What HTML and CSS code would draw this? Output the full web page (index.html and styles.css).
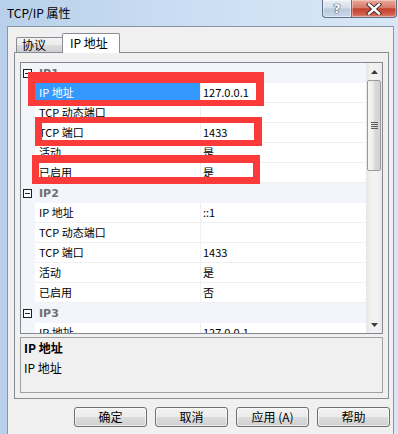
FILE: index.html
```html
<!DOCTYPE html>
<html>
<head>
<meta charset="utf-8">
<link rel="stylesheet" href="styles.css">
</head>
<body>
<div class="window">
  <div class="titlebar">
    <span class="title">TCP/IP 属性</span>
    <div class="caption">
      <div class="cb help"><span>?</span></div>
      <div class="cb close">
        <svg width="16" height="12" viewBox="0 0 16 12"><path d="M3 1.5 L13 10.5 M13 1.5 L3 10.5" stroke="#3a2a2a" stroke-width="4.2" stroke-linecap="square"/><path d="M3 1.5 L13 10.5 M13 1.5 L3 10.5" stroke="#fff" stroke-width="2.4" stroke-linecap="square"/></svg>
      </div>
    </div>
  </div>
  <div class="client">
    <div class="tabs">
      <div class="tab">协议</div>
      <div class="tab active">IP 地址</div>
    </div>
    <div class="panel">
      <div class="grid">
        <div class="rows">
          <div class="row cat"><span class="minus"></span><span class="cat-label">IP1</span></div>
          <div class="row"><span class="gutter"></span><span class="name sel">IP 地址</span><span class="value">127.0.0.1</span></div>
          <div class="row"><span class="gutter"></span><span class="name">TCP 动态端口</span><span class="value"></span></div>
          <div class="row"><span class="gutter"></span><span class="name">TCP 端口</span><span class="value">1433</span></div>
          <div class="row"><span class="gutter"></span><span class="name">活动</span><span class="value">是</span></div>
          <div class="row"><span class="gutter"></span><span class="name">已启用</span><span class="value">是</span></div>
          <div class="row cat"><span class="minus"></span><span class="cat-label">IP2</span></div>
          <div class="row"><span class="gutter"></span><span class="name">IP 地址</span><span class="value">::1</span></div>
          <div class="row"><span class="gutter"></span><span class="name">TCP 动态端口</span><span class="value"></span></div>
          <div class="row"><span class="gutter"></span><span class="name">TCP 端口</span><span class="value">1433</span></div>
          <div class="row"><span class="gutter"></span><span class="name">活动</span><span class="value">是</span></div>
          <div class="row"><span class="gutter"></span><span class="name">已启用</span><span class="value">否</span></div>
          <div class="row cat"><span class="minus"></span><span class="cat-label">IP3</span></div>
          <div class="row"><span class="gutter"></span><span class="name">IP 地址</span><span class="value">127.0.0.1</span></div>
        </div>
        <div class="scrollbar">
          <div class="arrow up"><svg width="7" height="4" viewBox="0 0 7 4"><path d="M3.5 0 L7 4 L0 4 Z" fill="#3c3c3c"/></svg></div>
          <div class="thumb">
            <div class="grip"><i></i><i></i><i></i><i></i></div>
          </div>
          <div class="track"></div>
          <div class="arrow down"><svg width="7" height="4" viewBox="0 0 7 4"><path d="M0 0 L7 0 L3.5 4 Z" fill="#3c3c3c"/></svg></div>
        </div>
      </div>
      <div class="desc">
        <div class="desc-title">IP 地址</div>
        <div class="desc-text">IP 地址</div>
      </div>
    </div>
    <div class="buttons">
      <div class="btn">确定</div>
      <div class="btn">取消</div>
      <div class="btn">应用 (A)</div>
      <div class="btn">帮助</div>
    </div>
  </div>
  <div class="mark m1"></div>
  <div class="mark m2"></div>
  <div class="mark m3"></div>
</div>
</body>
</html>
```
FILE: styles.css
```css
* { box-sizing: border-box; }
body {
  margin: 0;
  width: 398px;
  height: 434px;
  overflow: hidden;
  font-family: "Noto Sans CJK SC", sans-serif;
  color: #000;
}
.window {
  position: relative;
  width: 398px;
  height: 434px;
  background: linear-gradient(to right, #b8d0eb, #cfe1f4 60%, #d8e7f6);
  display: flex;
  flex-direction: column;
  overflow: hidden;
}
.titlebar {
  height: 26px;
  flex-shrink: 0;
  display: flex;
  align-items: flex-start;
}
.title {
  font-size: 12px;
  line-height: 16px;
  margin: 5px 0 0 7px;
}
.caption {
  margin-left: auto;
  margin-right: 1px;
  display: flex;
}
.cb {
  height: 18px;
  border: 1px solid #5f6f86;
  border-top: none;
  display: flex;
  align-items: center;
  justify-content: center;
}
.cb.help {
  width: 29px;
  border-right: none;
  border-radius: 0 0 0 4px;
  background: linear-gradient(#e8eef6, #d3deeb 48%, #b9c9dc 52%, #c9d7e8);
  box-shadow: inset 0 0 0 1px rgba(255,255,255,0.5);
}
.cb.help span {
  font-family: "DejaVu Sans", sans-serif;
  font-weight: bold;
  font-size: 13px;
  line-height: 13px;
  color: #fff;
  text-shadow: 0 0 1px #2f3d52, 0 0 1px #2f3d52, 0 0 1px #2f3d52;
}
.cb.close {
  width: 46px;
  border-radius: 0 0 4px 0;
  background: linear-gradient(#e9a99b, #d77a69 45%, #c4412d 52%, #cf5945 80%, #dc8474);
  box-shadow: inset 0 0 0 1px rgba(255,255,255,0.35);
}
.client {
  flex: 1;
  margin: 0 4px 0 7px;
  border: 1px solid #8a95a4;
  border-bottom: none;
  background: #f0f0f0;
  display: flex;
  flex-direction: column;
}
.tabs {
  margin: 6px 0 -1px 8px;
  height: 20px;
  display: flex;
  align-items: flex-end;
  position: relative;
  z-index: 1;
}
.tab {
  width: 46px;
  height: 15px;
  margin-bottom: 1px;
  border: 1px solid #898c95;
  border-bottom: none;
  border-right: none;
  border-radius: 2px 0 0 0;
  background: linear-gradient(#f3f3f3, #ebebeb 50%, #dcdcdc 50%, #cfcfcf);
  font-size: 12px;
  line-height: 14px;
  padding-left: 5px;
}
.tab.active {
  width: 58px;
  height: 20px;
  margin-bottom: 0;
  border-right: 1px solid #898c95;
  border-radius: 2px 2px 0 0;
  background: #fff;
  padding-left: 7px;
  line-height: 17px;
}
.panel {
  margin: 0 4px 0 6px;
  height: 347px;
  border: 1px solid #898c95;
  background: #f0f0f0;
  padding: 9px 5px 5px 5px;
  display: flex;
  flex-direction: column;
}
.grid {
  height: 272px;
  border: 1px solid #828790;
  background: #fff;
  display: flex;
  overflow: hidden;
}
.rows {
  flex: 1;
  overflow: hidden;
  font-size: 11px;
}
.row {
  height: 20px;
  display: flex;
  line-height: 19px;
}
.gutter {
  width: 14px;
  flex-shrink: 0;
  background: #f2f5fa;
}
.name {
  width: 165px;
  flex-shrink: 0;
  padding-left: 4px;
  border-bottom: 1px solid #f0f0f0;
  white-space: nowrap;
}
.name.sel {
  background: #3399ff;
  color: #fff;
}
.value {
  flex: 1;
  padding-left: 2px;
  border-left: 1px solid #f0f0f0;
  border-bottom: 1px solid #f0f0f0;
}
.row.cat {
  background: #f2f5fa;
  align-items: center;
}
.minus {
  width: 9px;
  height: 9px;
  margin: 0 7px 0 2px;
  border: 1px solid #1e1e1e;
  background: #fff;
  position: relative;
}
.minus::after {
  content: "";
  position: absolute;
  left: 1px;
  right: 1px;
  top: 3px;
  height: 1px;
  background: #1e1e1e;
}
.cat-label {
  font-family: "DejaVu Sans", sans-serif;
  font-weight: bold;
  font-size: 11px;
  color: #6f6f6f;
  line-height: 19px;
}
.scrollbar {
  width: 16px;
  flex-shrink: 0;
  background: linear-gradient(to right, #e6e6e6, #f2f2f2 30%, #f2f2f2 70%, #e9e9e9);
  display: flex;
  flex-direction: column;
}
.arrow {
  height: 17px;
  display: flex;
  align-items: center;
  justify-content: center;
  flex-shrink: 0;
}
.thumb {
  height: 91px;
  margin: 0 1px;
  border: 1px solid #9b9b9b;
  border-radius: 2px;
  background: linear-gradient(to right, #f6f6f6, #ececec 45%, #dadada 55%, #d2d2d2);
  display: flex;
  align-items: center;
  justify-content: center;
  flex-shrink: 0;
}
.grip {
  display: flex;
  flex-direction: column;
  gap: 1px;
}
.grip i {
  display: block;
  width: 7px;
  height: 1px;
  background: #5a5a5a;
}
.track { flex: 1; }
.desc {
  margin-top: 3px;
  height: 56px;
  border: 1px solid #a0a0a0;
  padding: 2px 0 0 3px;
  font-size: 12px;
  line-height: 16px;
}
.desc-title { font-weight: bold; }
.desc-text { margin-top: 4px; }
.buttons {
  margin-top: 8px;
  padding-right: 3px;
  display: flex;
  justify-content: flex-end;
  gap: 8px;
}
.btn {
  width: 73px;
  height: 20px;
  border: 1px solid #707070;
  border-radius: 3px;
  background: linear-gradient(#f2f2f2, #ebebeb 50%, #dddddd 50%, #cfcfcf);
  box-shadow: inset 0 0 0 1px rgba(255,255,255,0.6);
  font-size: 12px;
  line-height: 18px;
  text-align: center;
}
.mark {
  position: absolute;
  border: 7px solid #fb3a3a;
}
.m1 { left: 28px; top: 72px; width: 236px; height: 34px; border-top-width: 11px; border-right-width: 8px; border-bottom-width: 6px; }
.m2 { left: 35px; top: 117px; width: 227px; height: 29px; border-top-width: 6px; border-right-width: 8px; border-bottom-width: 6px; }
.m3 { left: 32px; top: 155px; width: 228px; height: 29px; border-top-width: 8px; border-right-width: 7px; border-bottom-width: 7px; }
```
